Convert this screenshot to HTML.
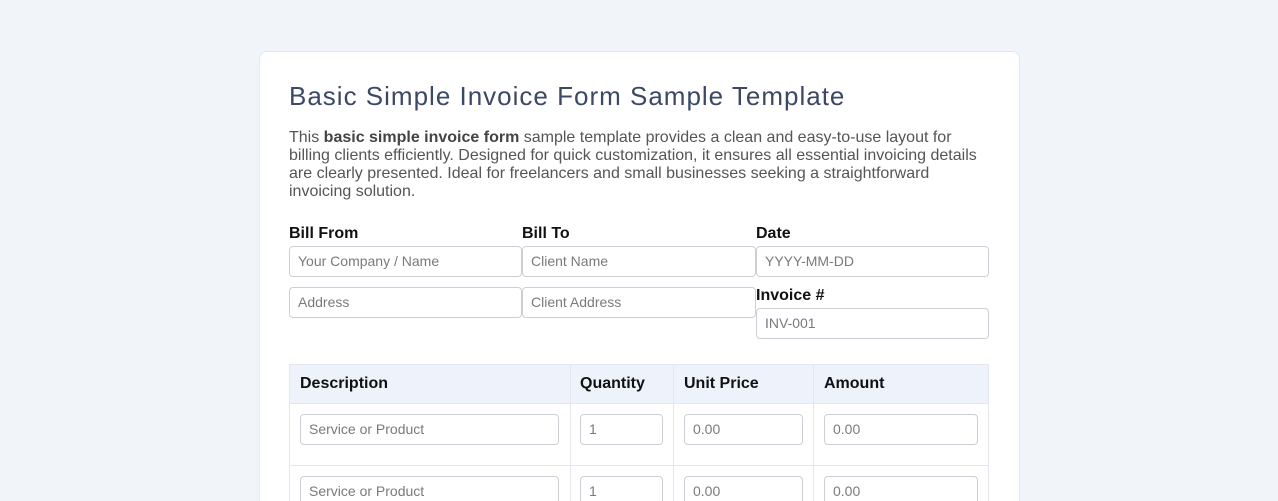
<!DOCTYPE html>
<html><head><meta charset="utf-8"><style>
*{box-sizing:border-box;margin:0;padding:0}
html,body{width:1278px;height:501px;overflow:hidden}
body{background:#f1f4f8;font-family:"Liberation Sans",Arial,sans-serif;position:relative}
.card{position:absolute;left:259px;top:51px;width:761px;height:460px;background:#fff;border:1px solid #e3e7ee;border-radius:8px}
h1{position:absolute;left:289px;top:81px;font-size:26px;font-weight:normal;color:#3b4866;letter-spacing:1px;white-space:nowrap}
p{position:absolute;left:289px;top:129px;width:700px;font-size:16px;line-height:18px;color:#555}
p b{color:#444}
.lbl{position:absolute;font-size:16px;font-weight:bold;color:#111}
.in{position:absolute;height:31px;border:1px solid #ccd0d6;border-radius:4px;background:#fff;font-size:14px;color:#7a7a7a;padding-left:8px;line-height:29px;white-space:nowrap}
.th{position:absolute;top:364px;height:40px;background:#eef2fb;border-top:1px solid #e2e6ee;border-bottom:1px solid #e2e6ee;font-weight:bold;font-size:16px;color:#111;padding-left:11px;line-height:38px}
.vl{position:absolute;width:1px;background:#e2e6ee;top:364px;height:137px}
.hl{position:absolute;height:1px;background:#e2e6ee;left:289px;width:700px}
</style></head><body>
<div class="card"></div>
<h1>Basic Simple Invoice Form Sample Template</h1>
<p>This <b>basic simple invoice form</b> sample template provides a clean and easy-to-use layout for billing clients efficiently. Designed for quick customization, it ensures all essential invoicing details are clearly presented. Ideal for freelancers and small businesses seeking a straightforward invoicing solution.</p>
<div class="lbl" style="left:289px;top:225px">Bill From</div>
<div class="lbl" style="left:522px;top:225px">Bill To</div>
<div class="lbl" style="left:756px;top:225px">Date</div>
<div class="in" style="left:289px;top:246px;width:233px">Your Company / Name</div>
<div class="in" style="left:522px;top:246px;width:234px">Client Name</div>
<div class="in" style="left:756px;top:246px;width:233px">YYYY-MM-DD</div>
<div class="in" style="left:289px;top:287px;width:233px">Address</div>
<div class="in" style="left:522px;top:287px;width:234px">Client Address</div>
<div class="lbl" style="left:756px;top:287px">Invoice #</div>
<div class="in" style="left:756px;top:308px;width:233px">INV-001</div>

<div class="th" style="left:289px;width:281px">Description</div>
<div class="th" style="left:570px;width:103px;padding-left:10px">Quantity</div>
<div class="th" style="left:673px;width:140px">Unit Price</div>
<div class="th" style="left:813px;width:176px">Amount</div>
<div class="vl" style="left:289px"></div>
<div class="vl" style="left:570px"></div>
<div class="vl" style="left:673px"></div>
<div class="vl" style="left:813px"></div>
<div class="vl" style="left:988px"></div>
<div class="hl" style="top:465px"></div>

<div class="in" style="left:300px;top:414px;width:259px">Service or Product</div>
<div class="in" style="left:580px;top:414px;width:83px">1</div>
<div class="in" style="left:684px;top:414px;width:119px">0.00</div>
<div class="in" style="left:824px;top:414px;width:154px">0.00</div>
<div class="in" style="left:300px;top:476px;width:259px">Service or Product</div>
<div class="in" style="left:580px;top:476px;width:83px">1</div>
<div class="in" style="left:684px;top:476px;width:119px">0.00</div>
<div class="in" style="left:824px;top:476px;width:154px">0.00</div>
</body></html>
